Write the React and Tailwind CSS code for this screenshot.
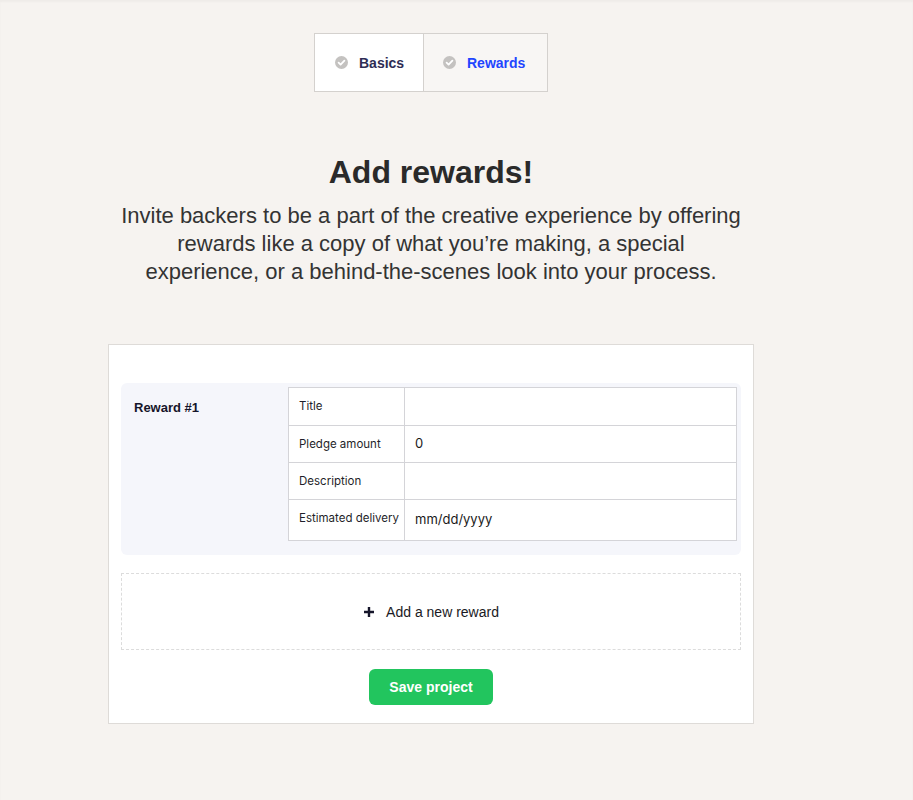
import { useState } from "react";

const fields = [
  { key: "title", label: "Title", value: "", h: "h-[37px]" },
  { key: "pledge", label: "Pledge amount", value: "0", h: "h-[37px]" },
  { key: "description", label: "Description", value: "", h: "h-[37px]" },
  { key: "delivery", label: "Estimated delivery", value: "mm/dd/yyyy", h: "h-[41px]" },
];

function CheckDot() {
  return (
    <svg width="13" height="13" viewBox="0 0 13 13" className="shrink-0">
      <circle cx="6.5" cy="6.5" r="6.5" fill="#c4c2c0" />
      <path d="M3.6 6.7 L5.6 8.6 L9.4 4.6" stroke="#fff" strokeWidth="1.8" fill="none" strokeLinecap="round" strokeLinejoin="round" />
    </svg>
  );
}

export default function App() {
  const [activeTab, setActiveTab] = useState("rewards");

  return (
    <div className="min-h-screen bg-[#f6f3f0] shadow-[inset_0_2px_2px_rgba(0,0,0,0.03)] font-['Liberation_Sans',Arial,sans-serif] text-[#2b2b2b]">
      <div className="w-[862px] pb-10">
        <div className="flex justify-center pt-[33px]">
          <div className="flex border border-[#d4d1ce]">
            <button
              onClick={() => setActiveTab("basics")}
              className="flex items-center gap-[11px] h-[57px] w-[109px] pl-[20px] bg-white border-r border-[#d4d1ce] text-sm font-bold text-[#2e2d55]"
            >
              <CheckDot />
              Basics
            </button>
            <button
              onClick={() => setActiveTab("rewards")}
              className="flex items-center gap-[11px] h-[57px] w-[123px] pl-[19px] bg-[#f8f6f4] text-sm font-bold text-[#1f45ff]"
            >
              <CheckDot />
              Rewards
            </button>
          </div>
        </div>

        <div className="flex flex-col items-center mt-[60px]">
          <h1 className="text-[32px] leading-[40px] font-bold text-[#2a2a2a]">Add rewards!</h1>
          <p className="mt-[10px] w-[700px] text-center text-[22px] leading-[28px] text-[#333]">
            Invite backers to be a part of the creative experience by offering
            <br />
            rewards like a copy of what you’re making, a special
            <br />
            experience, or a behind-the-scenes look into your process.
          </p>
        </div>

        <div className="mx-auto mt-[58px] w-[646px] bg-white border border-[#dedbd8] px-3 pt-[38px] pb-[18px]">
          <div className="flex rounded-md bg-[#f5f6fb]">
            <div className="w-[167px] pl-[13px] pt-[15px] text-[13px] font-bold text-[#15152a]">Reward #1</div>
            <div className="flex-1 mt-1 mr-1 mb-[14px] border border-[#d4d4d8] bg-white font-['Inter',sans-serif]">
              {fields.map((f, i) => (
                <div key={f.key} className={`flex ${f.h} ${i > 0 ? "border-t border-[#d4d4d8]" : ""}`}>
                  <div className="w-[116px] shrink-0 border-r border-[#d4d4d8] pl-[10px] pt-[10px] text-[11.5px] text-[#1f1f2a]">
                    {f.label}
                  </div>
                  <div className="flex-1 flex items-center pl-[10px] text-[13px] text-[#1a1a1a]">{f.value}</div>
                </div>
              ))}
            </div>
          </div>

          <button className="mt-[18px] flex w-full h-[77px] items-center justify-center gap-[11px] border border-dashed border-[#dcdcdc] text-sm text-[#1a1a24]">
            <svg width="12" height="12" viewBox="0 0 12 12">
              <path d="M6 1v10M1 6h10" stroke="#15152a" strokeWidth="2.4" />
            </svg>
            Add a new reward
          </button>

          <div className="flex justify-center mt-[19px]">
            <button className="h-[36px] w-[124px] rounded-md bg-[#22c55e] text-sm font-bold text-white">Save project</button>
          </div>
        </div>
      </div>
    </div>
  );
}
